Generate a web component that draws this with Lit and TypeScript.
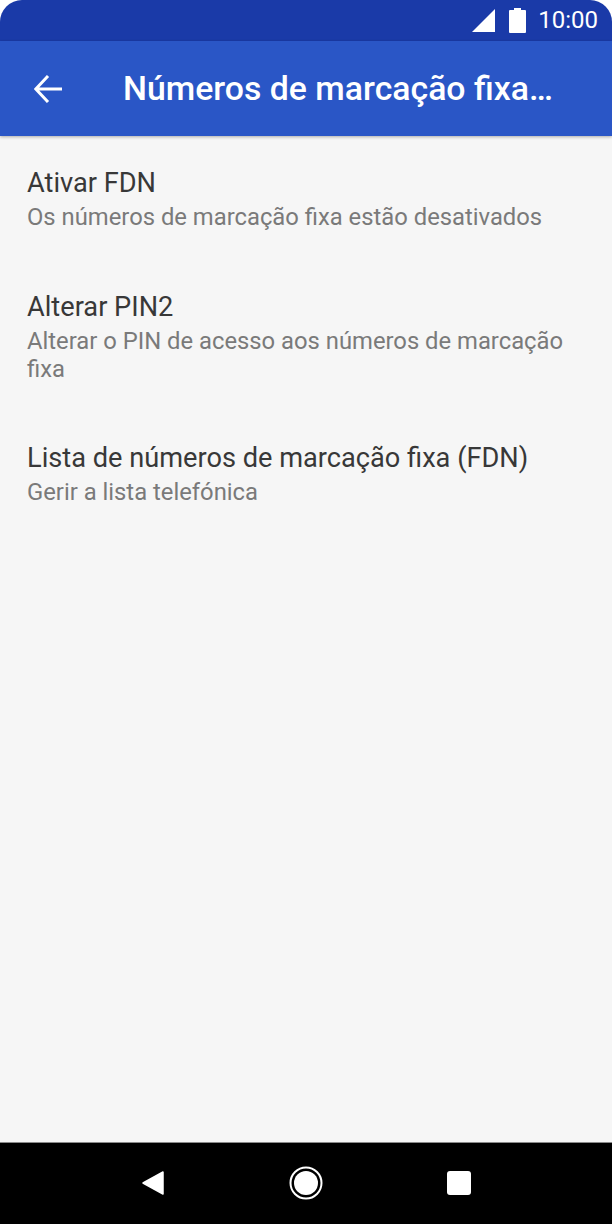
import { LitElement, html, css } from "lit";
import { customElement } from "lit/decorators.js";

@customElement("app-root")
export class AppRoot extends LitElement {
  static styles = css`
    :host {
      display: flex;
      flex-direction: column;
      width: 612px;
      height: 1224px;
      background: #f6f6f6;
      font-family: Roboto, sans-serif;
      overflow: hidden;
    }
    .outer { background: #fff; flex: none; }
    .status {
      height: 41px;
      background: #1a3aa8;
      border-radius: 22px 22px 0 0;
      display: flex;
      align-items: center;
      justify-content: flex-end;
      padding: 0 14px 0 0;
      color: #fff;
      font-size: 24px;
      box-sizing: border-box;
    }
    .status svg { display: block; }
    .sig { margin-right: 14px; }
    .bat { margin-right: 12px; }
    .time { line-height: 41px; }
    .bar {
      height: 95px;
      flex: none;
      background: #2a56c6;
      display: flex;
      align-items: center;
      box-shadow: 0 1px 3px rgba(0, 0, 0, 0.3);
      color: #fff;
      position: relative;
    }
    .back { margin-left: 34px; margin-right: 61px; display: block; flex: none; }
    .title { font-size: 33.8px; font-weight: 500; white-space: nowrap; }
    .list { flex: 1; padding-top: 27.4px; }
    .item { padding: 0 27px; margin-bottom: 55.3px; }
    .t { font-size: 27.2px; line-height: 40px; color: #383838; }
    .s { font-size: 23.8px; line-height: 28px; color: #7a7a7a; }
    .nav {
      height: 82px;
      flex: none;
      box-sizing: border-box;
      border-top: 1px solid #8a8a8a;
      padding-bottom: 1px;
      background: #000;
      display: grid;
      grid-template-columns: repeat(3, 153px);
      justify-content: center;
      justify-items: center;
      align-items: center;
    }
    .nav svg { display: block; }
  `;

  render() {
    return html`
      <div class="outer">
        <div class="status">
          <svg class="sig" width="23" height="23" viewBox="0 0 23 23"><path fill="#fff" d="M0 23 L23 0 V23 Z" /></svg>
          <svg class="bat" width="17" height="25" viewBox="0 0 17 25"><path fill="#fff" d="M5 0 H12 V2 H16 A1 1 0 0 1 17 3 V24 A1 1 0 0 1 16 25 H1 A1 1 0 0 1 0 24 V3 A1 1 0 0 1 1 2 H5 Z" /></svg>
          <span class="time">10:00</span>
        </div>
      </div>
      <div class="bar">
        <svg class="back" width="28" height="28" viewBox="0 0 28 28"><path fill="none" stroke="#fff" stroke-width="3" d="M1 14 H28 M14 1 L1.8 14 L14 27" /></svg>
        <span class="title">Números de marcação fixa…</span>
      </div>
      <div class="list">
        <div class="item">
          <div class="t">Ativar FDN</div>
          <div class="s">Os números de marcação fixa estão desativados</div>
        </div>
        <div class="item">
          <div class="t">Alterar PIN2</div>
          <div class="s">Alterar o PIN de acesso aos números de marcação fixa</div>
        </div>
        <div class="item">
          <div class="t">Lista de números de marcação fixa (FDN)</div>
          <div class="s">Gerir a lista telefónica</div>
        </div>
      </div>
      <div class="nav">
        <svg width="22" height="24" viewBox="0 0 22 24"><path fill="#fff" stroke="#fff" stroke-width="1.5" stroke-linejoin="round" d="M1 12 L21 1 V23 Z" /></svg>
        <svg width="34" height="34" viewBox="0 0 34 34"><circle cx="17" cy="17" r="15.5" fill="none" stroke="#fff" stroke-width="2" /><circle cx="17" cy="17" r="12" fill="#fff" /></svg>
        <svg width="24" height="24" viewBox="0 0 24 24"><rect width="24" height="24" rx="3" fill="#fff" /></svg>
      </div>
    `;
  }
}
